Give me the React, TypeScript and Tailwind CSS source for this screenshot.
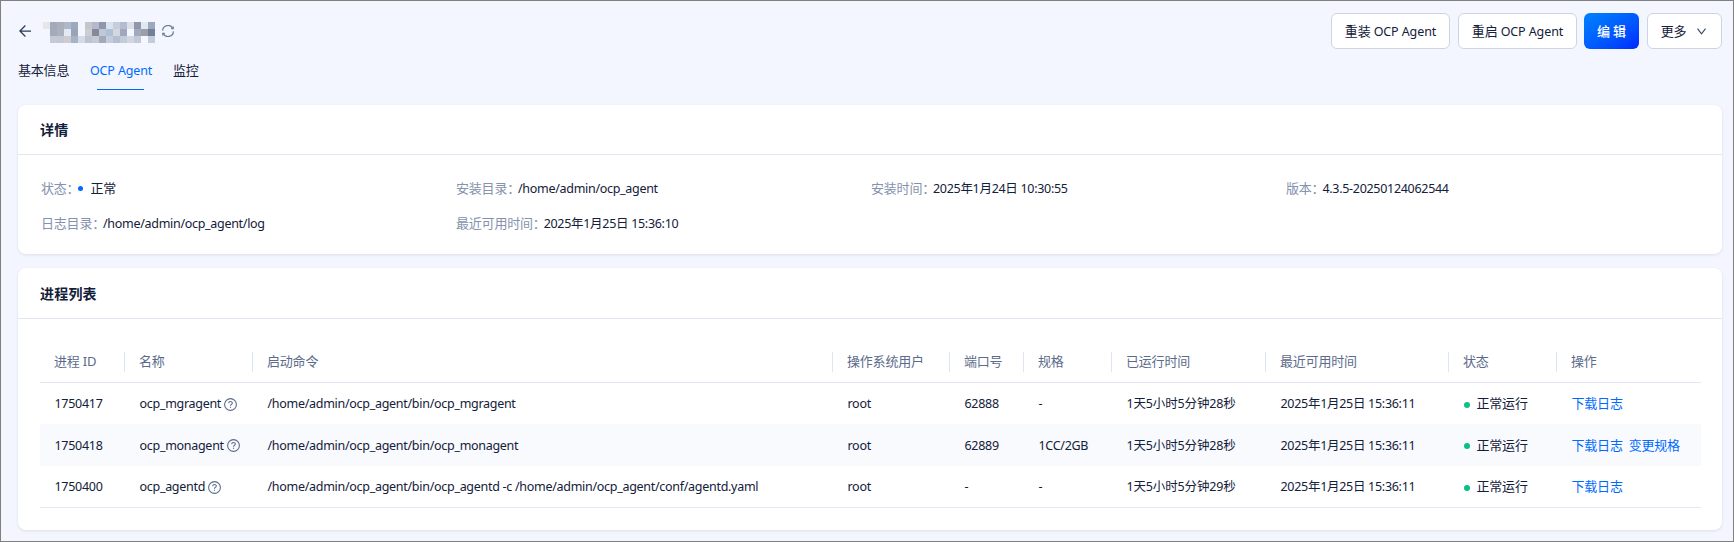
import type { ReactNode } from 'react';

const GRID =
  'grid grid-cols-[85px_128px_580px_117px_74px_88px_154px_183px_108px_144px] items-center';

const MASK = [
  ['#e6e6ea', '#a5aabb', '#abafbb', '#aeb8cb', '#9da8bd', '#f3f6fe', '#c4c6cf', '#b4bacb', '#8e97ab', '#d8e2f1', '#c7cedb', '#b3bdce', '#dddfe6', '#9097ab', '#e0e8f2', '#9ca9bc'],
  ['#f3f6fe', '#a2aabc', '#aeb0bd', '#e4e8f3', '#9aa4b8', '#f3f6fe', '#ccccd2', '#848a99', '#c1c7d4', '#b0c0d6', '#d4d7e0', '#9fa9bd', '#f3f6fe', '#a0a9bd', '#9c9ea9', '#728097'],
  ['#f3f6fe', '#c4cad8', '#c2c8d6', '#ceccd3', '#a8b2c6', '#d2dbe8', '#bcc3d1', '#c6cad5', '#a3a9ba', '#c2ccdc', '#b5bfd0', '#c2cbd9', '#d0d6e2', '#c2cad8', '#f4f7fe', '#c3ccd9'],
];

const COLUMNS = ['进程 ID', '名称', '启动命令', '操作系统用户', '端口号', '规格', '已运行时间', '最近可用时间', '状态', '操作'];

const PROCESSES = [
  {
    pid: '1750417',
    name: 'ocp_mgragent',
    command: '/home/admin/ocp_agent/bin/ocp_mgragent',
    port: '62888',
    spec: '-',
    uptime: '1天5小时5分钟28秒',
    actions: ['下载日志'],
  },
  {
    pid: '1750418',
    name: 'ocp_monagent',
    command: '/home/admin/ocp_agent/bin/ocp_monagent',
    port: '62889',
    spec: '1CC/2GB',
    uptime: '1天5小时5分钟28秒',
    actions: ['下载日志', '变更规格'],
  },
  {
    pid: '1750400',
    name: 'ocp_agentd',
    command: '/home/admin/ocp_agent/bin/ocp_agentd -c /home/admin/ocp_agent/conf/agentd.yaml',
    port: '-',
    spec: '-',
    uptime: '1天5小时5分钟29秒',
    actions: ['下载日志'],
  },
];

function BackIcon() {
  return (
    <svg className="w-3 h-3" viewBox="0 0 12 12" fill="none" stroke="#2b3a55" strokeWidth="1.25">
      <path d="M6.4 0.5L0.9 6L6.4 11.5M1 6H12" />
    </svg>
  );
}

function ReloadIcon() {
  return (
    <svg className="w-3 h-3" viewBox="0 0 12 12" fill="none" stroke="#6c7a99" strokeWidth="1.2">
      <path d="M0.6 5.6A5.4 5.4 0 0 1 10.8 3.4M11.4 6.4A5.4 5.4 0 0 1 1.2 8.6" />
      <path d="M11.2 1.4V3.7H9.2M0.8 10.6V8.3H2.8" />
    </svg>
  );
}

function HelpIcon() {
  return (
    <svg className="w-[13px] h-[13px]" viewBox="0 0 13 13" fill="none" stroke="#5c6b8a" strokeWidth="1.1">
      <circle cx="6.5" cy="6.5" r="5.9" />
      <path d="M4.7 5.2C4.7 2.9 8.3 2.9 8.3 5.1C8.3 6.5 6.5 6.3 6.5 7.8" />
      <path d="M6.5 8.7V9.8" />
    </svg>
  );
}

function Button({ children, className = '' }: { children: ReactNode; className?: string }) {
  return (
    <button
      className={`h-9 flex items-center justify-center rounded-md border border-[#cdd5e4] bg-white whitespace-nowrap ${className}`}
    >
      {children}
    </button>
  );
}

function Card({ title, className, children }: { title: string; className: string; children: ReactNode }) {
  return (
    <section className={`flex flex-col bg-white rounded-lg shadow-[0_1px_3px_rgba(54,69,99,0.12)] ${className}`}>
      <h2 className="h-[50px] shrink-0 grow-0 px-[22px] pt-px flex items-center border-b border-[#e2e8f3] text-sm font-bold tracking-[0.2px]">
        {title}
      </h2>
      {children}
    </section>
  );
}

function Item({ label, children }: { label: string; children: ReactNode }) {
  return (
    <div className="h-[35px] flex items-center whitespace-nowrap text-[12.5px] tracking-[-0.3px]">
      <span className="mr-[-2px] pb-0.5 text-[13px] tracking-[-0.2px] text-[#8592ad]">{label}：</span>
      {children}
    </div>
  );
}

export default function App() {
  return (
    <main className="w-[1734px] h-[542px] overflow-hidden border border-[#808080] bg-[#f3f6fe] pl-[17px] pr-[11px] text-[13px] leading-5 tracking-[-0.2px] text-[#132039] font-['Noto_Sans','Noto_Sans_CJK_SC',sans-serif]">

      {/* HEADER */}
      <header className="h-[54px] flex items-start justify-between pt-3">
        <div className="h-9 pl-px flex items-center">
          <BackIcon />
          <div className="ml-3 mt-[3px] grid grid-cols-[repeat(16,7px)]">
            {MASK.flat().map((color, i) => (
              <span key={i} className="h-[7px]" style={{ backgroundColor: color }} />
            ))}
          </div>
          <div className="ml-[7px]">
            <ReloadIcon />
          </div>
        </div>

        <div className="flex">
          <Button className="w-[119px] tracking-[-0.1px]">
            重装<span className="ml-[3px] pt-px text-[12.5px]">OCP Agent</span>
          </Button>
          <Button className="ml-2 w-[119px] tracking-[-0.1px]">
            重启<span className="ml-[3px] pt-px text-[12.5px]">OCP Agent</span>
          </Button>
          <button className="ml-[7px] w-[55px] h-9 rounded-md bg-linear-to-br from-[#0181fd] to-[#0025ff] text-white font-medium">
            编 辑
          </button>
          <Button className="ml-2 w-[75px] pr-0.5 gap-[11px]">
            更多
            <svg className="w-[9px] h-[7px]" viewBox="0 0 9 7" fill="none" stroke="#364563" strokeWidth="1.1">
              <path d="M0.5 0.7L4.5 5.9L8.5 0.7" />
            </svg>
          </Button>
        </div>
      </header>

      {/* TABS */}
      <nav className="h-[50px] flex items-start gap-[21px] pt-[5px]">
        <a className="w-[52px]">基本信息</a>
        <a className="-ml-px mr-px w-[61px] flex flex-col text-[#006aff] whitespace-nowrap">
          <span className="pt-px text-[12.5px] tracking-[-0.15px]">OCP Agent</span>
          <span className="ml-[7px] mt-2 w-[47px] h-px bg-[#006aff]" />
        </a>
        <a>监控</a>
      </nav>

      {/* DETAILS */}
      <Card title="详情" className="h-[149px]">
        <div className="grid grid-cols-[repeat(4,415px)] pl-[23px] pt-4">
          <Item label="状态">
            <span className="ml-px mb-px mr-[7px] w-[5px] h-[5px] rounded-full bg-[#006aff]" />
            <span className="pb-0.5 text-[13px] tracking-[-0.2px]">正常</span>
          </Item>
          <Item label="安装目录">/home/admin/ocp_agent</Item>
          <Item label="安装时间">2025年1月24日 10:30:55</Item>
          <Item label="版本">4.3.5-20250124062544</Item>
          <Item label="日志目录">/home/admin/ocp_agent/log</Item>
          <Item label="最近可用时间">2025年1月25日 15:36:10</Item>
        </div>
      </Card>

      {/* PROCESS LIST */}
      <Card title="进程列表" className="mt-[14px] h-[262px] *:first:h-[51px]">
        <div className="ml-[22px] mr-[21px] mt-[22px]">
          <div className={`${GRID} h-[42px] border-b border-[#e2e8f3] text-[#5c6b8a]`}>
            {COLUMNS.map((column) => (
              <div key={column} className="h-5 pl-[14px] leading-[18px] border-r border-[#dde4f2] last:border-r-0">
                {column}
              </div>
            ))}
          </div>

          {PROCESSES.map((row) => (
            <div
              key={row.pid}
              className={`${GRID} h-[41px] box-content odd:h-[42px] odd:bg-[#f8fafe] last:border-b last:border-[#e2e8f3] whitespace-nowrap text-[12.5px] tracking-[-0.29px] *:pl-[14.5px] *:pt-px`}
            >
              <div>{row.pid}</div>
              <div className="flex items-center gap-[3px]">
                {row.name}
                <HelpIcon />
              </div>
              <div>{row.command}</div>
              <div>root</div>
              <div>{row.port}</div>
              <div>{row.spec}</div>
              <div className="tracking-[-0.15px]">{row.uptime}</div>
              <div>2025年1月25日 15:36:11</div>
              <div className="flex items-center gap-[7px] pb-0.5 text-[13px] tracking-[-0.2px]">
                <span className="w-[6px] h-[6px] mt-[3px] rounded-full bg-[#0ac185]" />
                正常运行
              </div>
              <div className="flex gap-[6px] pb-0.5 text-[13px] tracking-[-0.2px] text-[#006aff]">
                {row.actions.map((action) => (
                  <a key={action}>{action}</a>
                ))}
              </div>
            </div>
          ))}
        </div>
      </Card>
    </main>
  );
}
